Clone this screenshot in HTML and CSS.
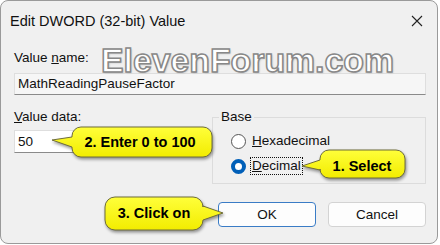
FILE: index.html
```html
<!DOCTYPE html>
<html lang="en">
<head>
    <meta charset="UTF-8">
    <title>Edit DWORD (32-bit) Value</title>
    <link rel="stylesheet" href="styles.css">
</head>
<body>
    <div class="window">
        <!-- Title bar -->
        <div class="titlebar">
            <span class="title">Edit DWORD (32-bit) Value</span>
            <svg class="close" width="12" height="12" viewBox="0 0 12 12">
                <path d="M1 1 L11 11 M11 1 L1 11" stroke="#222" stroke-width="1.1" fill="none"/>
            </svg>
        </div>

        <div class="content">
            <div class="label">Value <u>n</u>ame:</div>
            <div class="field name-field">MathReadingPauseFactor</div>

            <div class="row">
                <div class="col-data">
                    <div class="label"><u>V</u>alue data:</div>
                    <div class="field data-field">50</div>
                </div>
                <fieldset class="groupbox">
                    <legend>Base</legend>
                    <div class="radio-row">
                        <span class="radio"></span>
                        <span class="radio-text"><u>H</u>exadecimal</span>
                    </div>
                    <div class="radio-row">
                        <span class="radio checked"></span>
                        <span class="radio-text focused"><u>D</u>ecimal</span>
                    </div>
                </fieldset>
            </div>

            <div class="buttons">
                <button class="btn default">OK</button>
                <button class="btn">Cancel</button>
            </div>
        </div>
    </div>

    <!-- watermark over the dialog -->
    <div class="watermark">ElevenForum.com</div>

    <!-- callouts -->
    <svg class="callouts" width="440" height="245" viewBox="0 0 440 245">
        <defs>
            <linearGradient id="yel" x1="0" y1="0" x2="0" y2="1">
                <stop offset="0" stop-color="#ffff3a"/>
                <stop offset="1" stop-color="#f2ec00"/>
            </linearGradient>
        </defs>
        <g class="callout">
            <path d="M81,127 H203 A9,9 0 0 1 212,136 V148 A9,9 0 0 1 203,157 H81 A9,9 0 0 1 72,148 V147 L52,140 L72,137 V136 A9,9 0 0 1 81,127 Z"/>
            <text x="140" y="147">2. Enter 0 to 100</text>
        </g>
        <g class="callout">
            <path d="M329,150 H396 A9,9 0 0 1 405,159 V169 A9,9 0 0 1 396,178 H329 A9,9 0 0 1 320,169 V170 L302,166 L320,160 V159 A9,9 0 0 1 329,150 Z"/>
            <text x="362" y="171">1. Select</text>
        </g>
        <g class="callout">
            <path d="M115,197 H193 A10,10 0 0 1 203,207 V206 L223,213 L203,220 A10,10 0 0 1 193,230 H115 A10,10 0 0 1 105,220 V207 A10,10 0 0 1 115,197 Z"/>
            <text x="154" y="218">3. Click on</text>
        </g>
    </svg>
</body>
</html>
```

FILE: styles.css
```css
body {
    margin: 0;
    background-color: white;
    font-family: "Liberation Sans", Arial, sans-serif;
    position: relative;
    width: 440px;
    height: 245px;
    overflow: hidden;
}

.window {
    box-sizing: border-box;
    width: 438px;
    height: 244px;
    border: 1px solid #9a9a9a;
    border-radius: 8px;
    background-color: #f0f0f0;
    color: #111;
}

.titlebar {
    height: 40px;
    display: flex;
    align-items: center;
    justify-content: space-between;
    padding: 0 14px 0 9px;
}
.title {
    font-size: 14.5px;
}
.close {
    display: block;
}

.content {
    padding: 9px 11px 0 13px;
}

.label {
    font-size: 13.5px;
    line-height: 16px;
}

.field {
    box-sizing: border-box;
    font-size: 13.5px;
    line-height: 20px;
    padding: 0 3px;
    border: 1px solid #dedede;
    border-bottom-color: #8a8a8a;
}
.name-field {
    margin-top: 7px;
    height: 22px;
    background-color: #f6f6f6;
}
.data-field {
    margin-top: 5px;
    height: 23px;
    line-height: 21px;
    background-color: #fff;
}

.row {
    margin-top: 14px;
    display: grid;
    grid-template-columns: 191px 1fr;
    column-gap: 7px;
}

.groupbox {
    margin: 0;
    padding: 7px 0 8px 18px;
    border: 1px solid #dcdcdc;
    min-width: 0;
}
.groupbox legend {
    font-size: 13.5px;
    line-height: 16px;
    padding: 0 2px;
    margin-left: -12px;
}

.radio-row {
    display: flex;
    align-items: center;
    height: 18px;
    font-size: 13.5px;
}
.radio-row + .radio-row {
    margin-top: 7px;
}
.radio {
    box-sizing: border-box;
    width: 15px;
    height: 15px;
    border-radius: 50%;
    border: 1px solid #555;
    background-color: #fff;
    margin-right: 4px;
}
.radio.checked {
    border: 4.5px solid #005fb8;
    background-color: #fff;
}
.radio-text {
    padding: 0 1px;
    line-height: 16px;
    border: 1px solid transparent;
}
.radio-text.focused {
    border: 1px dotted #111;
}

.buttons {
    margin-top: 18px;
    display: flex;
    justify-content: flex-end;
    gap: 12px;
}
.btn {
    box-sizing: border-box;
    width: 98px;
    height: 25px;
    font-family: "Liberation Sans", Arial, sans-serif;
    font-size: 13.5px;
    color: #111;
    background-color: #fdfdfd;
    border: 1px solid #d3d3d3;
    border-radius: 4px;
}
.btn.default {
    border-color: #3a7cc6;
}

.watermark {
    position: absolute;
    left: 101px;
    top: 44px;
    font-size: 33.8px;
    line-height: 33px;
    font-weight: bold;
    color: #fff;
    -webkit-text-stroke: 1.5px #888;
    text-shadow: 1px 1px 2px rgba(0, 0, 0, 0.2);
    white-space: nowrap;
}

.callouts {
    position: absolute;
    left: 0;
    top: 0;
    pointer-events: none;
}
.callout path {
    fill: url(#yel);
    stroke: #6e6c3a;
    stroke-width: 1;
    filter: drop-shadow(1.5px 2px 1.5px rgba(0, 0, 0, 0.4));
}
.callout text {
    font-family: "Liberation Sans", Arial, sans-serif;
    font-weight: bold;
    font-size: 14.5px;
    text-anchor: middle;
    fill: #000;
}
```
